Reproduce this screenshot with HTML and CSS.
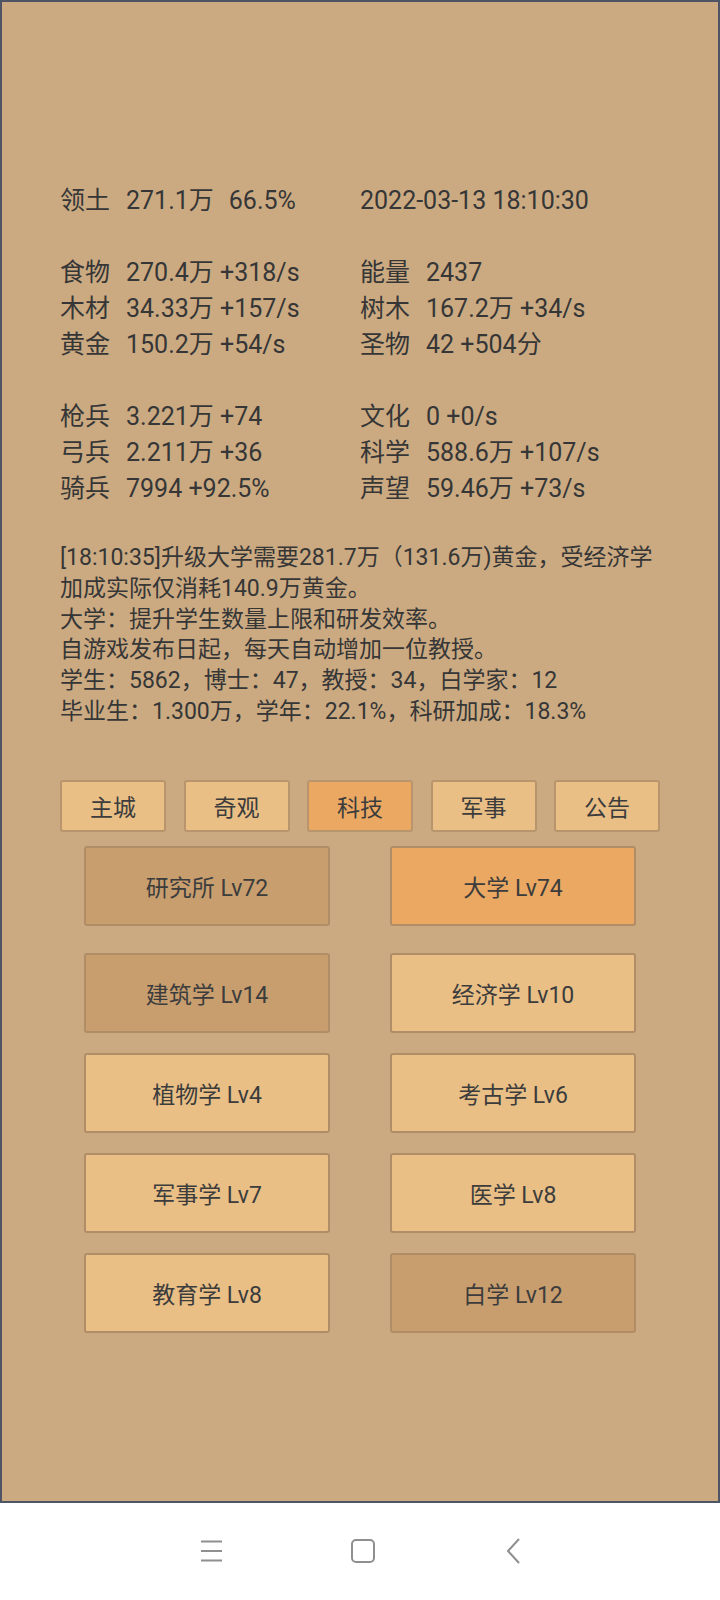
FILE: index.html
```html
<!DOCTYPE html>
<html lang="zh-CN">
<head>
<meta charset="utf-8">
<title>科技</title>
<link rel="stylesheet" href="styles.css">
</head>
<body>
<div class="screen">
  <main class="panel">
    <section class="stats">
      <div class="row">
        <div class="cell"><span class="lbl">领土</span><span class="val">271.1万</span><span class="val extra">66.5%</span></div>
        <div class="cell"><span class="val">2022-03-13 18:10:30</span></div>
      </div>
      <div class="row blank"></div>
      <div class="row">
        <div class="cell"><span class="lbl">食物</span><span class="val">270.4万 +318/s</span></div>
        <div class="cell"><span class="lbl">能量</span><span class="val">2437</span></div>
      </div>
      <div class="row">
        <div class="cell"><span class="lbl">木材</span><span class="val">34.33万 +157/s</span></div>
        <div class="cell"><span class="lbl">树木</span><span class="val">167.2万 +34/s</span></div>
      </div>
      <div class="row">
        <div class="cell"><span class="lbl">黄金</span><span class="val">150.2万 +54/s</span></div>
        <div class="cell"><span class="lbl">圣物</span><span class="val">42 +504分</span></div>
      </div>
      <div class="row blank"></div>
      <div class="row">
        <div class="cell"><span class="lbl">枪兵</span><span class="val">3.221万 +74</span></div>
        <div class="cell"><span class="lbl">文化</span><span class="val">0 +0/s</span></div>
      </div>
      <div class="row">
        <div class="cell"><span class="lbl">弓兵</span><span class="val">2.211万 +36</span></div>
        <div class="cell"><span class="lbl">科学</span><span class="val">588.6万 +107/s</span></div>
      </div>
      <div class="row">
        <div class="cell"><span class="lbl">骑兵</span><span class="val">7994 +92.5%</span></div>
        <div class="cell"><span class="lbl">声望</span><span class="val">59.46万 +73/s</span></div>
      </div>
    </section>

    <section class="log">
      <p>[18:10:35]升级大学需要281.7万（131.6万)黄金，受经济学<br>加成实际仅消耗140.9万黄金。</p>
      <p>大学：提升学生数量上限和研发效率。</p>
      <p>自游戏发布日起，每天自动增加一位教授。</p>
      <p>学生：5862，博士：47，教授：34，白学家：12</p>
      <p>毕业生：1.300万，学年：22.1%，科研加成：18.3%</p>
    </section>

    <nav class="tabs">
      <div class="tab">主城</div>
      <div class="tab">奇观</div>
      <div class="tab active">科技</div>
      <div class="tab">军事</div>
      <div class="tab">公告</div>
    </nav>

    <section class="buildings">
      <div class="brow first">
        <div class="bld dark">研究所 Lv72</div>
        <div class="bld active">大学 Lv74</div>
      </div>
      <div class="brow">
        <div class="bld dark">建筑学 Lv14</div>
        <div class="bld">经济学 Lv10</div>
      </div>
      <div class="brow">
        <div class="bld">植物学 Lv4</div>
        <div class="bld">考古学 Lv6</div>
      </div>
      <div class="brow">
        <div class="bld">军事学 Lv7</div>
        <div class="bld">医学 Lv8</div>
      </div>
      <div class="brow">
        <div class="bld">教育学 Lv8</div>
        <div class="bld dark">白学 Lv12</div>
      </div>
    </section>
  </main>

  <footer class="navbar">
    <svg class="nav-icon" width="24" height="24" viewBox="0 0 24 24" aria-hidden="true">
      <path d="M1 2.5H22M1 12H22M1 21.5H22" stroke="#8f8f8f" stroke-width="2" fill="none"/>
    </svg>
    <svg class="nav-icon" width="26" height="26" viewBox="0 0 26 26" aria-hidden="true">
      <rect x="2" y="2" width="22" height="22" rx="4" ry="4" stroke="#8f8f8f" stroke-width="2" fill="none"/>
    </svg>
    <svg class="nav-icon" width="16" height="26" viewBox="0 0 16 26" aria-hidden="true">
      <path d="M14 1L3 13L14 25" stroke="#8f8f8f" stroke-width="2" fill="none"/>
    </svg>
  </footer>
</div>
</body>
</html>
```

FILE: styles.css
```css
* {
  box-sizing: border-box;
}

html, body {
  margin: 0;
  padding: 0;
  background: #ffffff;
}

body {
  font-family: Roboto, "Noto Sans CJK SC", "Noto Sans", sans-serif;
  color: #363636;
}

.screen {
  width: 720px;
  height: 1600px;
  display: flex;
  flex-direction: column;
}

.panel {
  height: 1503px;
  background: #cbaa82;
  border: 2px solid #4e5463;
  padding: 181px 58px 0 58px;
}

/* stats */
.stats {
  font-size: 25px;
  line-height: 36px;
  color: #363636;
}

.row {
  display: grid;
  grid-template-columns: 300px 1fr;
  height: 36px;
}

.cell {
  display: flex;
  white-space: nowrap;
}

.lbl {
  width: 50px;
  margin-right: 16px;
  flex: none;
}

.val.extra {
  margin-left: 15px;
}

/* log */
.log {
  margin-top: 36px;
  font-size: 23px;
  line-height: 30.8px;
  color: #363636;
}

.log p {
  margin: 0;
  white-space: nowrap;
}

/* tabs */
.tabs {
  margin-top: 52px;
  display: flex;
  justify-content: space-between;
}

.tab {
  width: 106px;
  height: 52px;
  background: #e9bf86;
  border: 2px solid #b8956c;
  border-radius: 3px;
  display: flex;
  align-items: center;
  justify-content: center;
  font-size: 23px;
  color: #3c3c3c;
}

.tab.active {
  background: #eba862;
}

/* buildings */
.buildings {
  margin-top: 14px;
  padding: 0 24px;
  display: flex;
  flex-direction: column;
  gap: 20px;
}

.brow {
  display: flex;
  justify-content: space-between;
}

.brow.first {
  margin-bottom: 7px;
}

.bld {
  width: 246px;
  height: 80px;
  background: #e9bf86;
  border: 2px solid #b08d66;
  border-radius: 3px;
  display: flex;
  align-items: center;
  justify-content: center;
  font-size: 23px;
  color: #3c3c3c;
}

.bld.dark {
  background: #c89e6f;
}

.bld.active {
  background: #eba862;
}

/* navbar */
.navbar {
  flex: 1;
  background: #ffffff;
  display: flex;
  align-items: center;
  justify-content: center;
  padding-bottom: 2px;
}

.nav-icon:nth-child(1) {
  margin-right: 126px;
}

.nav-icon:nth-child(2) {
  margin-right: 129px;
}
```
